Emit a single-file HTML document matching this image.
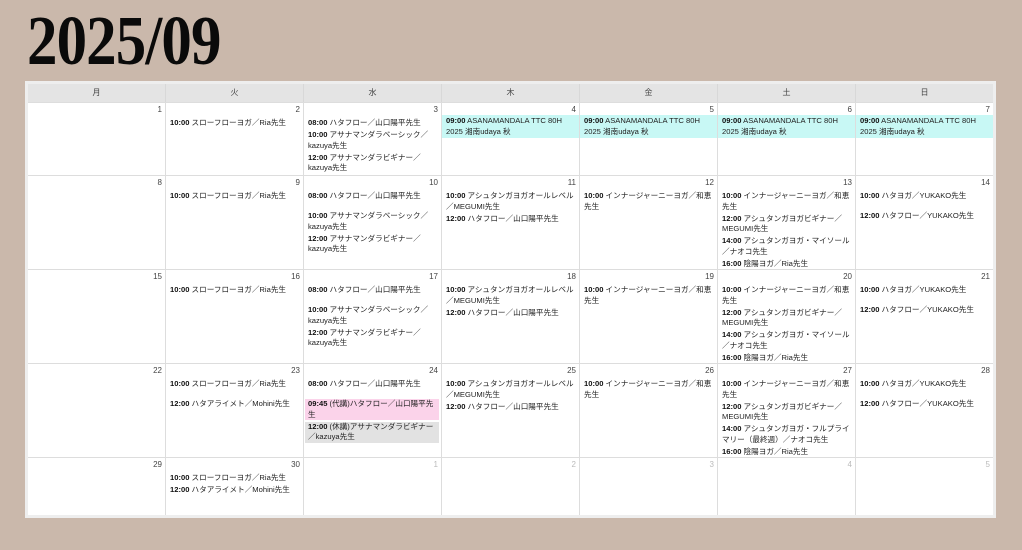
<!DOCTYPE html>
<html><head><meta charset="utf-8"><style>
*{margin:0;padding:0;box-sizing:border-box}
body{width:1022px;height:550px;background:#cab8ab;position:relative;overflow:hidden;font-family:"Liberation Sans","Noto Sans CJK JP",sans-serif;color:#222}
h1{position:absolute;left:27px;top:4px;font-family:"Liberation Serif","Noto Serif CJK SC",serif;font-weight:bold;font-size:70px;line-height:76px;color:#0a0a0a;transform:scaleX(0.87);transform-origin:left top;letter-spacing:-1px}
.cal{position:absolute;left:25px;top:81px;width:971px;height:437px;background:#eeeeee;padding:3px}
.grid{display:grid;grid-template-columns:137px 138px 138px 138px 138px 138px 138px;grid-template-rows:18px 73px 94px 94px 94px 58px;background:#fff}
.h{background:#e4e4e4;font-size:8px;text-align:center;line-height:18px;color:#444;border-left:1px solid #d8d8d8}
.c{border-left:1px solid #ddd;border-top:1px solid #ddd;padding:1px 2px 0 3px;font-size:7.6px;overflow:hidden}
.n{text-align:right;line-height:11px;color:#444;font-size:8px;padding-right:1px}
.g{color:#bbb}
.e{line-height:10.5px;margin-bottom:1.5px;padding-left:1px}
.e b{font-weight:bold;color:#111}
.sp{height:8px}
.cy{background:#c8f8f5;padding:1px 1px 1px 1px;margin-left:-3px;margin-right:-2px;padding-left:4px}
.pk{background:#fbd3ea;margin-left:-2px;margin-right:0;padding-left:3px}
.gr{background:#e2e2e2;margin-left:-2px;margin-right:0;padding-left:3px}
.first{margin-top:3px}
</style></head><body>
<h1>2025/09</h1>
<div class="cal"><div class="grid">
<div class="h" style="border-left:none">月</div><div class="h">火</div><div class="h">水</div><div class="h">木</div><div class="h">金</div><div class="h">土</div><div class="h">日</div>

<div class="c" style="border-left:none"><div class="n">1</div></div>
<div class="c"><div class="n">2</div><div class="e first"><b>10:00</b> スローフローヨガ／Ria先生</div></div>
<div class="c"><div class="n">3</div><div class="e first"><b>08:00</b> ハタフロー／山口陽平先生</div><div class="e"><b>10:00</b> アサナマンダラベーシック／kazuya先生</div><div class="e"><b>12:00</b> アサナマンダラビギナー／kazuya先生</div></div>
<div class="c"><div class="n">4</div><div class="e cy"><b>09:00</b> ASANAMANDALA TTC 80H 2025 湘南udaya 秋</div></div>
<div class="c"><div class="n">5</div><div class="e cy"><b>09:00</b> ASANAMANDALA TTC 80H 2025 湘南udaya 秋</div></div>
<div class="c"><div class="n">6</div><div class="e cy"><b>09:00</b> ASANAMANDALA TTC 80H 2025 湘南udaya 秋</div></div>
<div class="c"><div class="n">7</div><div class="e cy"><b>09:00</b> ASANAMANDALA TTC 80H 2025 湘南udaya 秋</div></div>

<div class="c" style="border-left:none"><div class="n">8</div></div>
<div class="c"><div class="n">9</div><div class="e first"><b>10:00</b> スローフローヨガ／Ria先生</div></div>
<div class="c"><div class="n">10</div><div class="e first"><b>08:00</b> ハタフロー／山口陽平先生</div><div class="sp"></div><div class="e"><b>10:00</b> アサナマンダラベーシック／kazuya先生</div><div class="e"><b>12:00</b> アサナマンダラビギナー／kazuya先生</div></div>
<div class="c"><div class="n">11</div><div class="e first"><b>10:00</b> アシュタンガヨガオールレベル／MEGUMI先生</div><div class="e"><b>12:00</b> ハタフロー／山口陽平先生</div></div>
<div class="c"><div class="n">12</div><div class="e first"><b>10:00</b> インナージャーニーヨガ／和恵先生</div></div>
<div class="c"><div class="n">13</div><div class="e first"><b>10:00</b> インナージャーニーヨガ／和恵先生</div><div class="e"><b>12:00</b> アシュタンガヨガビギナー／MEGUMI先生</div><div class="e"><b>14:00</b> アシュタンガヨガ・マイソール／ナオコ先生</div><div class="e"><b>16:00</b> 陰陽ヨガ／Ria先生</div></div>
<div class="c"><div class="n">14</div><div class="e first"><b>10:00</b> ハタヨガ／YUKAKO先生</div><div class="sp"></div><div class="e"><b>12:00</b> ハタフロー／YUKAKO先生</div></div>

<div class="c" style="border-left:none"><div class="n">15</div></div>
<div class="c"><div class="n">16</div><div class="e first"><b>10:00</b> スローフローヨガ／Ria先生</div></div>
<div class="c"><div class="n">17</div><div class="e first"><b>08:00</b> ハタフロー／山口陽平先生</div><div class="sp"></div><div class="e"><b>10:00</b> アサナマンダラベーシック／kazuya先生</div><div class="e"><b>12:00</b> アサナマンダラビギナー／kazuya先生</div></div>
<div class="c"><div class="n">18</div><div class="e first"><b>10:00</b> アシュタンガヨガオールレベル／MEGUMI先生</div><div class="e"><b>12:00</b> ハタフロー／山口陽平先生</div></div>
<div class="c"><div class="n">19</div><div class="e first"><b>10:00</b> インナージャーニーヨガ／和恵先生</div></div>
<div class="c"><div class="n">20</div><div class="e first"><b>10:00</b> インナージャーニーヨガ／和恵先生</div><div class="e"><b>12:00</b> アシュタンガヨガビギナー／MEGUMI先生</div><div class="e"><b>14:00</b> アシュタンガヨガ・マイソール／ナオコ先生</div><div class="e"><b>16:00</b> 陰陽ヨガ／Ria先生</div></div>
<div class="c"><div class="n">21</div><div class="e first"><b>10:00</b> ハタヨガ／YUKAKO先生</div><div class="sp"></div><div class="e"><b>12:00</b> ハタフロー／YUKAKO先生</div></div>

<div class="c" style="border-left:none"><div class="n">22</div></div>
<div class="c"><div class="n">23</div><div class="e first"><b>10:00</b> スローフローヨガ／Ria先生</div><div class="sp"></div><div class="e"><b>12:00</b> ハタアライメト／Mohini先生</div></div>
<div class="c"><div class="n">24</div><div class="e first"><b>08:00</b> ハタフロー／山口陽平先生</div><div class="sp"></div><div class="e pk"><b>09:45</b> (代講)ハタフロー／山口陽平先生</div><div class="e gr"><b>12:00</b> (休講)アサナマンダラビギナー／kazuya先生</div></div>
<div class="c"><div class="n">25</div><div class="e first"><b>10:00</b> アシュタンガヨガオールレベル／MEGUMI先生</div><div class="e"><b>12:00</b> ハタフロー／山口陽平先生</div></div>
<div class="c"><div class="n">26</div><div class="e first"><b>10:00</b> インナージャーニーヨガ／和恵先生</div></div>
<div class="c"><div class="n">27</div><div class="e first"><b>10:00</b> インナージャーニーヨガ／和恵先生</div><div class="e"><b>12:00</b> アシュタンガヨガビギナー／MEGUMI先生</div><div class="e"><b>14:00</b> アシュタンガヨガ・フルプライマリー（最終週）／ナオコ先生</div><div class="e"><b>16:00</b> 陰陽ヨガ／Ria先生</div></div>
<div class="c"><div class="n">28</div><div class="e first"><b>10:00</b> ハタヨガ／YUKAKO先生</div><div class="sp"></div><div class="e"><b>12:00</b> ハタフロー／YUKAKO先生</div></div>

<div class="c" style="border-left:none"><div class="n">29</div></div>
<div class="c"><div class="n">30</div><div class="e first"><b>10:00</b> スローフローヨガ／Ria先生</div><div class="e"><b>12:00</b> ハタアライメト／Mohini先生</div></div>
<div class="c"><div class="n g">1</div></div>
<div class="c"><div class="n g">2</div></div>
<div class="c"><div class="n g">3</div></div>
<div class="c"><div class="n g">4</div></div>
<div class="c"><div class="n g">5</div></div>
</div></div>
</body></html>
